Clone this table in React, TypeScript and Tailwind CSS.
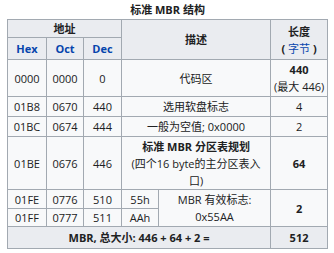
import React from 'react';

const cell = 'border border-[#a2a9b1] px-[3px] py-0 text-center align-middle';
const head = cell + ' bg-[#eaecf0] font-bold';
const link = 'text-[#0645ad]';

export default function App() {
  return (
    <div
      className="bg-white pl-[7px] text-[11px] leading-[17px] text-[#202122]"
      style={{ fontFamily: '"Open Sans", "Noto Sans CJK SC", sans-serif' }}
    >
      <table className="w-[320px] table-fixed border-collapse bg-[#f8f9fa]">
        <caption className="h-[19px] bg-white font-bold leading-[19px]">标准 MBR 结构</caption>
        <colgroup>
          <col className="w-[39px]" />
          <col className="w-[37px]" />
          <col className="w-[38px]" />
          <col className="w-[37px]" />
          <col className="w-[112px]" />
          <col className="w-[57px]" />
        </colgroup>
        <tbody>
          <tr className="h-[17px]">
            <th colSpan={3} className={head}>地址</th>
            <th colSpan={2} rowSpan={2} className={head}>描述</th>
            <th rowSpan={2} className={head}>
              长度
              <br />( <span className={link + ' font-normal'}>字节</span> )
            </th>
          </tr>
          <tr className="h-[22px]">
            <th className={head + ' ' + link}>Hex</th>
            <th className={head + ' ' + link}>Oct</th>
            <th className={head + ' ' + link}>Dec</th>
          </tr>
          <tr className="h-[37px]">
            <td className={cell}>0000</td>
            <td className={cell}>0000</td>
            <td className={cell}>0</td>
            <td colSpan={2} className={cell}>代码区</td>
            <td className={cell + ' whitespace-nowrap px-0'}>
              <b>440</b>
              <br />(最大 446)
            </td>
          </tr>
          <tr className="h-[20px]">
            <td className={cell}>01B8</td>
            <td className={cell}>0670</td>
            <td className={cell}>440</td>
            <td colSpan={2} className={cell}>选用软盘标志</td>
            <td className={cell}>4</td>
          </tr>
          <tr className="h-[20px]">
            <td className={cell}>01BC</td>
            <td className={cell}>0674</td>
            <td className={cell}>444</td>
            <td colSpan={2} className={cell}>一般为空值; 0x0000</td>
            <td className={cell}>2</td>
          </tr>
          <tr className="h-[53px]">
            <td className={cell}>01BE</td>
            <td className={cell}>0676</td>
            <td className={cell}>446</td>
            <td colSpan={2} className={cell}>
              <b>标准 MBR 分区表规划</b>
              <br />(四个16 byte的主分区表入
              <br />口)
            </td>
            <td className={cell + ' font-bold'}>64</td>
          </tr>
          <tr className="h-[19px]">
            <td className={cell}>01FE</td>
            <td className={cell}>0776</td>
            <td className={cell}>510</td>
            <td className={cell}>55h</td>
            <td rowSpan={2} className={cell}>
              MBR 有效标志:
              <br />0x55AA
            </td>
            <td rowSpan={2} className={cell + ' font-bold'}>2</td>
          </tr>
          <tr className="h-[18px]">
            <td className={cell}>01FF</td>
            <td className={cell}>0777</td>
            <td className={cell}>511</td>
            <td className={cell}>AAh</td>
          </tr>
          <tr className="h-[22px]">
            <th colSpan={5} className={head}>MBR, 总大小: 446 + 64 + 2 =</th>
            <th className={head}>512</th>
          </tr>
        </tbody>
      </table>
    </div>
  );
}
